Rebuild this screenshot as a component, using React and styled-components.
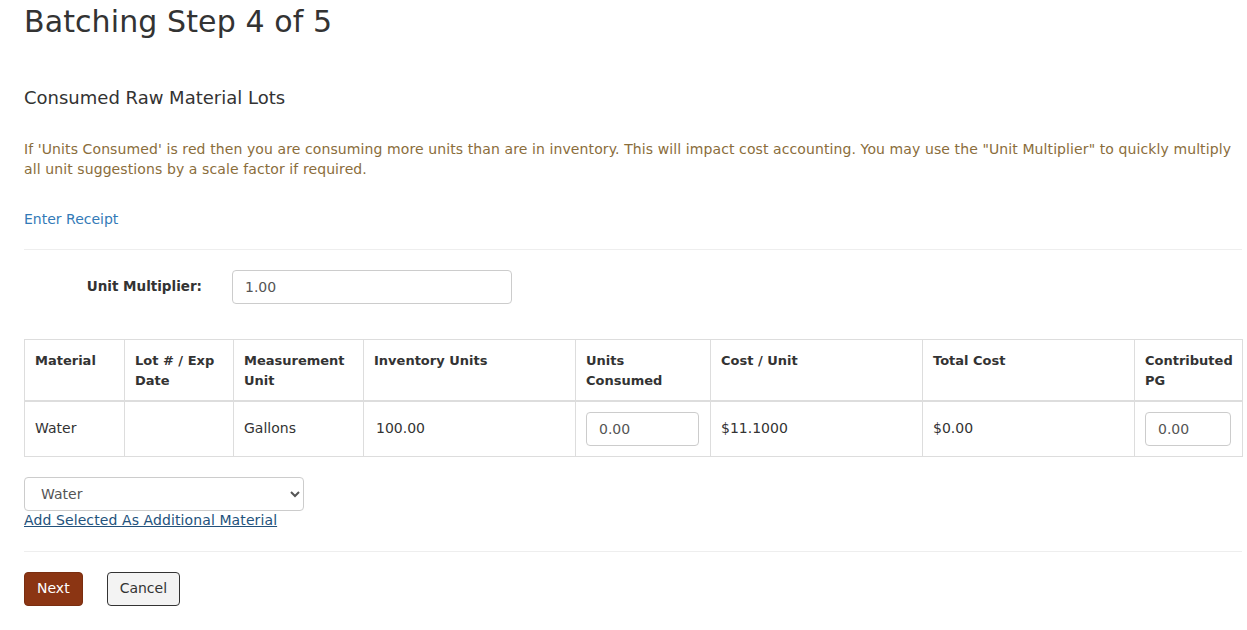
import React from "react";
import styled, { createGlobalStyle } from "styled-components";

const GlobalStyle = createGlobalStyle`
  html, body {
    margin: 0;
    padding: 0;
    background: #fff;
  }
  body {
    font-family: "DejaVu Sans", "Noto Sans", sans-serif;
    font-size: 14px;
    line-height: 1.42857;
    color: #333;
  }
  * {
    box-sizing: border-box;
  }
`;

const columns = [
  { label: "Material", width: 100 },
  { label: "Lot # / Exp Date", width: 109 },
  { label: "Measurement Unit", width: 130 },
  { label: "Inventory Units", width: 212 },
  { label: "Units Consumed", width: 135 },
  { label: "Cost / Unit", width: 212 },
  { label: "Total Cost", width: 212 },
  { label: "Contributed PG", width: 108 },
];

const Page = styled.div`
  padding: 0 5px 20px 24px;
`;

const Title = styled.h1`
  margin: 0;
  padding-top: 3px;
  font-size: 30px;
  font-weight: 400;
  line-height: 38px;
  letter-spacing: 0.1px;
  color: #333;
`;

const SubTitle = styled.h4`
  margin: 44px 0 0;
  font-size: 18px;
  font-weight: 400;
  line-height: 26px;
`;

const Warning = styled.p`
  margin: 28px 0 0;
  color: #8a6d3b;
  line-height: 20px;
  letter-spacing: 0.1px;
`;

const TextLink = styled.a`
  display: inline-block;
  margin-top: 31px;
  color: #337ab7;
  text-decoration: none;
`;

const Divider = styled.hr`
  margin: ${(p) => p.$top || 20}px 0 0;
  border: 0;
  border-top: 1px solid #eee;
`;

const FormRow = styled.div`
  display: flex;
  align-items: center;
  margin-top: 20px;
`;

const Label = styled.label`
  width: 208px;
  padding-right: 30px;
  text-align: right;
  font-weight: 700;
  font-size: 13.5px;
`;

const TextInput = styled.input`
  width: ${(p) => p.$width || 280}px;
  height: 34px;
  padding: 6px 12px;
  font: inherit;
  color: #555;
  border: 1px solid #ccc;
  border-radius: 4px;
  background: #fff;
`;

const Table = styled.table`
  width: 100%;
  margin-top: 35px;
  border-collapse: collapse;
  table-layout: fixed;
`;

const HeadCell = styled.th`
  padding: 11px 6px 8px 10px;
  text-align: left;
  vertical-align: top;
  font-size: 13px;
  line-height: 20px;
  font-weight: 700;
  border: 1px solid #ddd;
  border-bottom-width: 2px;
  height: 62px;
`;

const Cell = styled.td`
  padding: 8px 10px;
  vertical-align: middle;
  border: 1px solid #ddd;
  height: 55px;
`;

const Select = styled.select`
  display: block;
  margin-top: 20px;
  width: 280px;
  height: 34px;
  padding: 6px 12px;
  font: inherit;
  color: #555;
  border: 1px solid #ccc;
  border-radius: 4px;
  background: #fff;
`;

const UnderLink = styled.a`
  display: inline-block;
  color: #23527c;
  text-decoration: underline;
  letter-spacing: 0.1px;
`;

const Actions = styled.div`
  display: flex;
  gap: 24px;
  margin-top: 20px;
`;

const Button = styled.button`
  height: 34px;
  padding: 6px 12px;
  font: inherit;
  border-radius: 4px;
  cursor: pointer;
  color: ${(p) => (p.$primary ? "#fff" : "#333")};
  background: ${(p) => (p.$primary ? "#8b3513" : "#f3f3f3")};
  border: 1px solid ${(p) => (p.$primary ? "#7a2e10" : "#333")};
`;

export default function App() {
  return (
    <Page>
      <GlobalStyle />
      <Title>Batching Step 4 of 5</Title>
      <SubTitle>Consumed Raw Material Lots</SubTitle>
      <Warning>
        If 'Units Consumed' is red then you are consuming more units than are in
        inventory. This will impact cost accounting. You may use the "Unit
        Multiplier" to quickly multiply all unit suggestions by a scale factor
        if required.
      </Warning>
      <TextLink href="#">Enter Receipt</TextLink>
      <Divider $top={19} />
      <FormRow>
        <Label>Unit Multiplier:</Label>
        <TextInput defaultValue="1.00" />
      </FormRow>
      <Table>
        <colgroup>
          {columns.map((c) => (
            <col key={c.label} style={{ width: c.width }} />
          ))}
        </colgroup>
        <thead>
          <tr>
            {columns.map((c) => (
              <HeadCell key={c.label}>{c.label}</HeadCell>
            ))}
          </tr>
        </thead>
        <tbody>
          <tr>
            <Cell>Water</Cell>
            <Cell />
            <Cell>Gallons</Cell>
            <Cell style={{ paddingLeft: 12 }}>100.00</Cell>
            <Cell>
              <TextInput $width={113} defaultValue="0.00" />
            </Cell>
            <Cell>$11.1000</Cell>
            <Cell>$0.00</Cell>
            <Cell>
              <TextInput $width={86} defaultValue="0.00" />
            </Cell>
          </tr>
        </tbody>
      </Table>
      <Select defaultValue="Water">
        <option>Water</option>
      </Select>
      <UnderLink href="#">Add Selected As Additional Material</UnderLink>
      <Divider $top={20} />
      <Actions>
        <Button $primary>Next</Button>
        <Button>Cancel</Button>
      </Actions>
    </Page>
  );
}
